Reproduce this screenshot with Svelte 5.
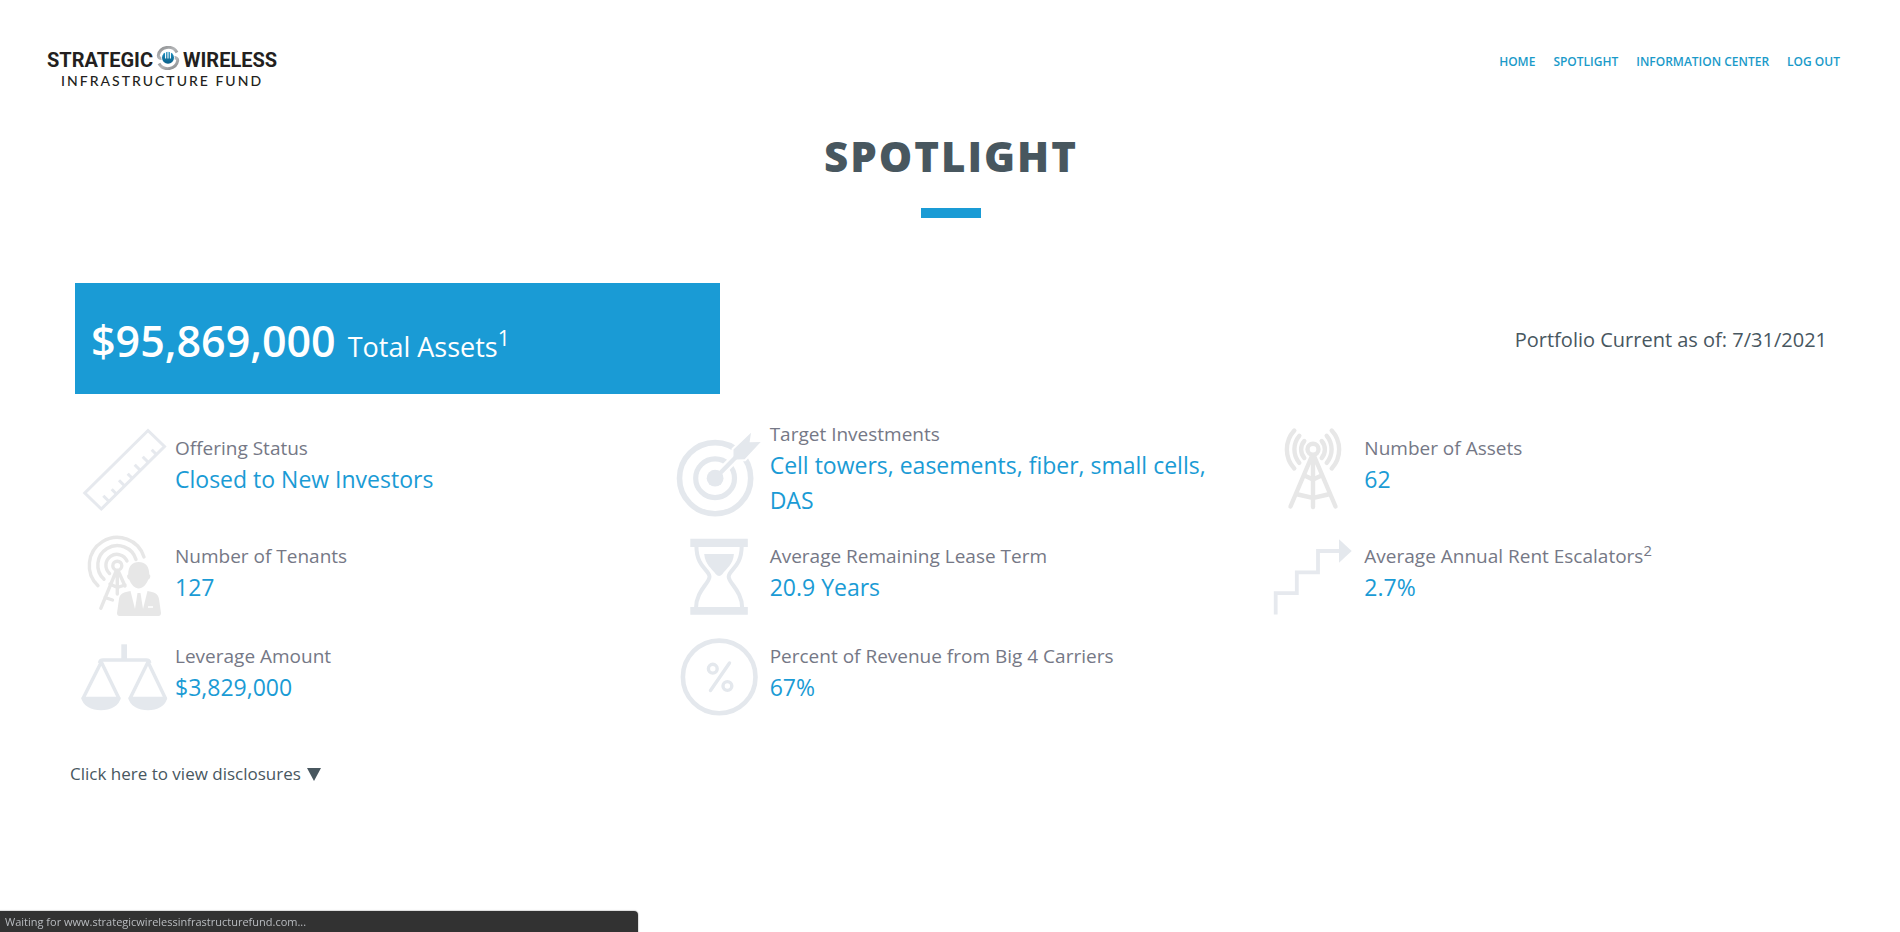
<script>
  const links = ['Home', 'Spotlight', 'Information Center', 'Log Out'];

  const facts = [
    { icon: 'ruler', label: 'Offering Status', value: 'Closed to New Investors' },
    { icon: 'target', label: 'Target Investments', value: 'Cell towers, easements, fiber, small cells, DAS' },
    { icon: 'tower', label: 'Number of Assets', value: '62' },
    { icon: 'tenants', label: 'Number of Tenants', value: '127' },
    { icon: 'hourglass', label: 'Average Remaining Lease Term', value: '20.9 Years' },
    { icon: 'stairs', label: 'Average Annual Rent Escalators', note: '2', value: '2.7%' },
    { icon: 'scales', label: 'Leverage Amount', value: '$3,829,000' },
    { icon: 'percent', label: 'Percent of Revenue from Big 4 Carriers', value: '67%' }
  ];
</script>

<header>
  <a class="logo" href="#home">
    <span class="logo-top">
      <span>STRATEGIC</span>
      <svg class="emblem" viewBox="0 0 24 24" aria-hidden="true">
        <defs>
          <linearGradient id="ring" x1="0" y1="0" x2="1" y2="1">
            <stop offset="0" stop-color="#8b8d8f" />
            <stop offset="0.5" stop-color="#b4b6b8" />
            <stop offset="1" stop-color="#85878a" />
          </linearGradient>
          <linearGradient id="disc" x1="0" y1="0" x2="0" y2="1">
            <stop offset="0" stop-color="#1c8fc0" />
            <stop offset="1" stop-color="#0a5f88" />
          </linearGradient>
        </defs>
        <g fill="none" stroke="url(#ring)" stroke-width="3">
          <path d="M21 6.5A10 9.6 0 0 0 2.3 9.5C2.3 11.6 4 12.5 6.5 12.5" />
          <path d="M3 17.5A10 9.6 0 0 0 21.7 14.5C21.7 12.4 20 11.5 17.5 11.5" />
        </g>
        <circle cx="12" cy="11.8" r="6.8" fill="#fff" />
        <circle cx="12" cy="11.8" r="6" fill="url(#disc)" />
        <path d="M9.6 4.5V12.5M12 4.5V12.5M14.4 4.5V12.5" fill="none" stroke="#fff" stroke-width="1.1" />
      </svg>
      <span>WIRELESS</span>
    </span>
    <span class="logo-bottom">INFRASTRUCTURE FUND</span>
  </a>
  <nav>
    {#each links as link}
      <a href="#{link.toLowerCase().replace(' ', '-')}">{link}</a>
    {/each}
  </nav>
</header>

<main>
  <h1>Spotlight</h1>

  <section class="summary">
    <p class="assets"><strong>$95,869,000</strong><span>Total Assets<sup>1</sup></span></p>
    <p class="date">Portfolio Current as of: 7/31/2021</p>
  </section>

  <section class="facts">
    {#each facts as fact}
      <article>
        <svg class="icon" viewBox="0 0 90 90" aria-hidden="true">
          {#if fact.icon === 'ruler'}
            <g fill="none" stroke="#e6e9ee" stroke-width="3">
              <path d="M69 6.5L85.5 22.5L22.3 85L5.8 69Z" />
              <path d="M30.3 77.7l-6-6M37.7 70.3l-5-5M46 62.3l-6-6M53.7 54.7l-5-5M61.7 46.7l-6-6M69.7 38.7l-6-6M77.7 30.7l-5-5" />
            </g>
          {:else if fact.icon === 'target'}
            <g fill="none" stroke="#e4e8ed">
              <circle cx="41.1" cy="54.2" r="35.6" stroke-width="5.6" />
              <circle cx="41.1" cy="54.2" r="19.4" stroke-width="5.2" />
            </g>
            <path d="M41.1 54.2L64 31" stroke="#fff" stroke-width="9" />
            <path d="M59.5 25.5L77 8.7L75.6 18.3L86.7 18L70.6 35.3L62 35.5L59.5 33.5Z" fill="#fff" stroke="#fff" stroke-width="4" />
            <circle cx="41.1" cy="54.2" r="8.4" fill="#e4e8ed" />
            <path d="M41.1 54.2L64 31" stroke="#e4e8ed" stroke-width="4.4" />
            <path d="M59.5 25.5L77 8.7L75.6 18.3L86.7 18L70.6 35.3L62 35.5L59.5 33.5Z" fill="#e4e8ed" />
          {:else if fact.icon === 'tower'}
            <g fill="none" stroke="#e7e7e7" stroke-width="4.4" stroke-linecap="round">
              <circle cx="45" cy="25.3" r="5.5" />
              <path d="M26.3 6.5A28 28 0 0 0 26.3 44.5M31.3 11.8A21 21 0 0 0 31.3 38.8M36.3 17A13 13 0 0 0 36.3 34" />
              <path d="M63.7 6.5A28 28 0 0 1 63.7 44.5M58.7 11.8A21 21 0 0 1 58.7 38.8M53.7 17A13 13 0 0 1 53.7 34" />
              <path d="M43.5 33L22.5 82.5M46.5 33L67.5 82.5M45 32V83" />
              <path d="M37.5 52L45 55.5L52.5 52M30 70.5L45 74L60 70.5" />
            </g>
          {:else if fact.icon === 'tenants'}
            <g fill="none" stroke="#e7e7e7" stroke-width="3.4" stroke-linecap="round">
              <circle cx="38.3" cy="33.7" r="4.5" />
              <path d="M19 53.7A28 28 0 1 1 65 25" />
              <path d="M25 47.3A19.5 19.5 0 1 1 57 27.5" />
              <path d="M30.5 41.5A11 11 0 1 1 48 29" />
              <path d="M37 39.5L21.8 76.3M39.5 39.5L46 54M38.3 39V62M31 52L38.3 55.5L46 53M26 65.5L33.5 68" />
            </g>
            <path d="M59.7 30C66 30 70.3 34 70.3 42.5C72 42.5 71.5 47 69.3 47.5C67.5 52.5 63.5 56.5 59.7 56.5C55.9 56.5 52 52.5 50.2 47.5C48 47 47.4 42.5 49.2 42.5C49.2 34 53.5 30 59.7 30Z" fill="#e7e7e7" stroke="#fff" stroke-width="1" paint-order="stroke" />
            <path d="M51.5 59L56 77L58.5 61H61.5L64 77L68.5 59C75 60 79 61.5 80 67L82 81Q82 84 79.5 84H40.5Q38 84 38 81L40 67C41 61.5 45 60 51.5 59Z" fill="#e7e7e7" />
            <path d="M69 75h5" stroke="#fff" stroke-width="1.6" />
          {:else if fact.icon === 'hourglass'}
            <path d="M16.3 6.7H73.8V15H16.3ZM16.3 75H73.8V82.7H16.3ZM30.2 22H59.9C59.5 32 52 37 48.5 42Q45.1 46 41.7 42C38 37 31 32 30.2 22Z" fill="#e4e8ed" />
            <g fill="none" stroke="#e4e8ed" stroke-width="4">
              <path d="M22.4 14C22.4 35 35.5 38 35.5 44.7C35.5 51 22 59 22 76" />
              <path d="M67.7 14C67.7 35 54.7 38 54.7 44.7C54.7 51 68.2 59 68.2 76" />
            </g>
          {:else if fact.icon === 'stairs'}
            <path d="M7.7 82.5V61.2H28.8V40.3H50V19H72" fill="none" stroke="#e6e9ee" stroke-width="3.8" />
            <path d="M71 7.3L83.7 19L71 30.7Z" fill="#e4e8ed" />
          {:else if fact.icon === 'scales'}
            <path d="M42.3 12.3H48V27H42.3Z" fill="#e4e8ed" />
            <path d="M2.5 65.5H41.5C41 74 31 78.3 22 78.3S3 74 2.5 65.5ZM49.5 65.5H88C87.5 74 78 78.3 69 78.3S50 74 49.5 65.5Z" fill="#e4e8ed" />
            <g fill="none" stroke="#e4e8ed" stroke-width="3.4" stroke-linejoin="round">
              <path d="M20.5 31Q21 28 24 28H67.3Q70.3 28 70.8 31" />
              <path d="M22.3 30L4 66.5H40L22.3 30M69 30L51 66.5H86.5L69 30" />
            </g>
          {:else}
            <g fill="none" stroke="#e4e8ed" stroke-linecap="round">
              <circle cx="45.2" cy="44.9" r="36.3" stroke-width="4.6" />
              <circle cx="38.8" cy="36.7" r="4.4" stroke-width="3.4" />
              <circle cx="53.4" cy="54" r="4.4" stroke-width="3.4" />
              <path d="M55.5 31L36.5 58.5" stroke-width="3.4" />
            </g>
          {/if}
        </svg>
        <div class="text">
          <h2>{fact.label}{#if fact.note}<sup>{fact.note}</sup>{/if}</h2>
          <p>{fact.value}</p>
        </div>
      </article>
    {/each}
  </section>

  <button class="disclosures" type="button">
    Click here to view disclosures
    <svg viewBox="0 0 14 13" aria-hidden="true"><path d="M0 0H14L7 13Z" fill="#48575f" /></svg>
  </button>
</main>

<div class="status" role="status">Waiting for www.strategicwirelessinfrastructurefund.com...</div>

<style>
  :global(body) {
    background: #fff;
    color: #48575f;
    font-family: 'Open Sans', 'Noto Sans', sans-serif;
  }

  h1, h2, p {
    margin: 0;
    font-weight: 400;
  }

  a {
    text-decoration: none;
  }

  header {
    display: flex;
    justify-content: space-between;
    align-items: flex-start;
    padding: 46px 60px 0 47px;
  }

  .logo {
    display: flex;
    flex-direction: column;
    align-items: center;
    color: #231f20;
  }

  .logo-top {
    display: flex;
    align-items: center;
    gap: 3px;
    font: 700 20px/28px Roboto, sans-serif;
  }

  .emblem {
    width: 24px;
    height: 24px;
    margin-bottom: 4px;
  }

  .logo-bottom {
    font: 500 14px/14px Lato, sans-serif;
    letter-spacing: 2px;
  }

  nav {
    display: flex;
    gap: 18px;
    padding-top: 7px;
  }

  nav a {
    color: #1a9ac9;
    font-size: 12px;
    font-weight: 600;
    line-height: 18px;
    text-transform: uppercase;
  }

  h1 {
    padding: 40px 0 0 2px;
    font-size: 42px;
    font-weight: 800;
    line-height: 56px;
    letter-spacing: 2px;
    text-align: center;
    text-transform: uppercase;
  }

  h1::after {
    content: '';
    display: block;
    width: 60px;
    height: 10px;
    margin: 24px auto 0;
    background: #1a9bd5;
  }

  .summary {
    display: grid;
    grid-template-columns: 7fr 12fr;
    align-items: center;
    margin: 65px 73px 17px 75px;
  }

  .assets {
    display: flex;
    align-items: baseline;
    gap: 12px;
    padding: 28px 16px 23px;
    background: #1a9bd5;
    color: #fff;
    font-size: 27px;
    line-height: 30px;
  }

  .assets strong {
    font-size: 43px;
    font-weight: 600;
    line-height: 60px;
  }

  sup {
    font-size: 78%;
    line-height: 0;
    vertical-align: 0.5em;
  }

  .date {
    padding-top: 3px;
    font-size: 20px;
    line-height: 30px;
    text-align: right;
  }

  .facts {
    display: grid;
    grid-template-columns: repeat(3, 1fr);
    grid-template-rows: minmax(116px, auto);
    grid-auto-rows: minmax(100px, auto);
    margin: 0 46px 0 70px;
  }

  article {
    display: flex;
    align-items: center;
    gap: 6px;
    padding: 0 40px 0 9px;
  }

  .icon {
    flex: none;
    width: 90px;
    height: 90px;
    overflow: visible;
  }

  .text {
    min-height: 68px;
  }

  h2 {
    color: #757886;
    font-size: 19px;
    line-height: 27px;
  }

  .text p {
    color: #1a9bd5;
    font-size: 23px;
    line-height: 35px;
  }

  .disclosures {
    display: flex;
    align-items: center;
    gap: 6px;
    margin: 34px 70px 60px;
    padding: 0;
    border: 0;
    background: none;
    color: inherit;
    font: inherit;
    font-size: 17px;
    line-height: 26px;
  }

  .disclosures svg {
    width: 14px;
    height: 13px;
  }

  .status {
    position: fixed;
    bottom: 0;
    left: 0;
    box-sizing: border-box;
    width: 638px;
    max-width: 100%;
    padding: 0 5px;
    border-radius: 0 4px 0 0;
    background: #323232;
    box-shadow: 0 0 1px 1px #dcdcdc;
    color: #b9bcc0;
    font-size: 11px;
    line-height: 21px;
  }
</style>
